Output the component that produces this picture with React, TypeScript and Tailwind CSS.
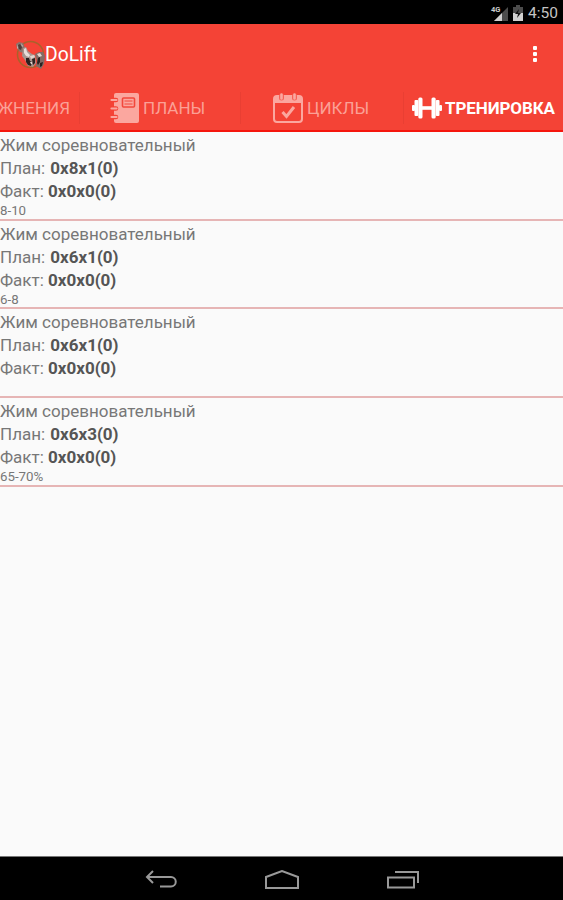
import type { ReactNode } from "react";

interface ExerciseProps {
  title: string;
  plan: string;
  fact: string;
  note: string;
}

const exercises: ExerciseProps[] = [
  { title: "Жим соревновательный", plan: "0x8x1(0)", fact: "0x0x0(0)", note: "8-10" },
  { title: "Жим соревновательный", plan: "0x6x1(0)", fact: "0x0x0(0)", note: "6-8" },
  { title: "Жим соревновательный", plan: "0x6x1(0)", fact: "0x0x0(0)", note: "" },
  { title: "Жим соревновательный", plan: "0x6x3(0)", fact: "0x0x0(0)", note: "65-70%" },
];

const LogoIcon = () => (
  <svg viewBox="0 0 30 30" className="h-[30px] w-[30px]">
    <circle cx="15.500" cy="14.500" r="13" fill="none" stroke="#a9622b" strokeWidth="1.5" />
    <path d="M1 4l3-2 4 1 2 5-1 5-4-1-3-4z" fill="#8c746c" />
    <path d="M8 8l3-1 2 4 4 3 3 1 1 8-3 4-5-1-3-6-3-4z" fill="#a8958e" />
    <path d="M20 14l4-2 4 0 2 4-1 8-3 5-5-3 1-5z" fill="#826c66" />
    <path d="M3 5l2-1 2 3-1 3-2-1z" fill="#4e3c3a" />
    <path d="M2 4l1 4-1 1zM6 3l2 3-1 1z" fill="#c9b9b2" />
    <path d="M9 9l2-1 1 4 3 3-1 2-3-1-2-3z" fill="#e8dfda" />
    <path d="M11 18l3 0 1 3 2 1-1 4-3-1-2-3zM17 19l3-1 0 5-2 2zM23 18l2-1 0 5-2 3-1-2zM25 23l3-1-1 4-2 1z" fill="#2c2120" />
    <path d="M15 16l4-1 1 2-4 2zM22 14l3-1 2 3-3 1zM15 22l2 0 0 2h-1z" fill="#e2d5ce" />
  </svg>
);

const NotebookIcon = () => (
  <svg viewBox="0 0 30 32" className="h-8 w-[30px]" fill="#fba79f">
    <path d="M6 1h21a2 2 0 012 2v26a2 2 0 01-2 2H6a2 2 0 01-2-2V3a2 2 0 012-2z" />
    <path d="M3 8h3M3 16.500h3M3 25h3" stroke="#f44336" strokeWidth="4.6" strokeLinecap="round" />
    <path d="M1.500 8h5M1.500 16.500h5M1.500 25h5" stroke="#fba79f" strokeWidth="2.2" strokeLinecap="round" />
    <rect x="12.500" y="6" width="12" height="9" rx="1" fill="none" stroke="#f2483c" strokeWidth="1.6" />
    <path d="M14.500 9h8M14.500 12h8" stroke="#f2483c" strokeWidth="1" />
  </svg>
);

const CalendarIcon = () => (
  <svg viewBox="0 0 32 32" className="h-8 w-8" fill="none" stroke="#fba79f">
    <rect x="2" y="4" width="28" height="26" rx="3" strokeWidth="2" />
    <path d="M2 11V7a3 3 0 013-3h22a3 3 0 013 3v4z" fill="#fba79f" stroke="none" />
    <path d="M9.500 4v2M22.500 4v2" stroke="#f66055" strokeWidth="5" strokeLinecap="round" />
    <path d="M9.500 2.500v4M22.500 2.500v4" strokeWidth="2.6" strokeLinecap="round" />
    <path d="M10.500 20l4 4.500 7.500-9.500" strokeWidth="3" />
  </svg>
);

const DumbbellIcon = () => (
  <svg viewBox="0 0 32 24" className="h-6 w-8" fill="#fff">
    <rect x="1" y="9" width="3" height="6" rx="1" />
    <rect x="3.500" y="4" width="3.800" height="16" rx="1" />
    <rect x="7.300" y="1.500" width="4.200" height="21" rx="1.500" />
    <rect x="11" y="10.200" width="10" height="3.600" />
    <rect x="20.500" y="1.500" width="4.200" height="21" rx="1.500" />
    <rect x="24.800" y="4" width="3.700" height="16" rx="1" />
    <rect x="28" y="9" width="3" height="6" rx="1" />
  </svg>
);

const StatusBar = () => (
  <div className="flex h-6 shrink-0 items-center justify-end bg-black pr-[5px] pt-px">
    <svg viewBox="0 0 34 18" className="mr-[5px] h-[18px] w-[34px]">
      <path d="M19 3v14H5z" fill="#4c4c4c" />
      <path d="M13 9v8H5z" fill="#d0d0d0" />
      <text x="2" y="8" fontSize="7.500" fontWeight="700" fill="#ccc">4G</text>
      <path d="M24 3h3V1h4v2h3v7H24z" fill="#4c4c4c" />
      <path d="M24 9h10v8H24z" fill="#d0d0d0" />
      <path d="M30 5l-4 5h3l-1 4 4-5h-3z" fill="#111" />
    </svg>
    <span className="text-[15.5px] leading-6 text-[#c4c4c4]">4:50</span>
  </div>
);

const AppBar = () => (
  <div className="flex h-[62px] items-center justify-between pl-[15px] pr-[26px]">
    <div className="flex items-center">
      <LogoIcon />
      <span className="text-[19.3px] leading-6 text-white">DoLift</span>
    </div>
    <div className="flex flex-col gap-[2px] pb-[2px]">
      <span className="h-[4px] w-[4px] rounded-[1px] bg-white" />
      <span className="h-[4px] w-[4px] rounded-[1px] bg-white" />
      <span className="h-[4px] w-[4px] rounded-[1px] bg-white" />
    </div>
  </div>
);

const Tab = ({ children, className }: { children: ReactNode; className: string }) => (
  <div className={`flex h-8 shrink-0 items-center whitespace-nowrap text-[17px] ${className}`}>
    {children}
  </div>
);

const Tabs = () => (
  <div className="flex h-[46px] items-center overflow-hidden border-b-2 border-[#f5160d] text-[#fba096]">
    <Tab className="w-[80px] justify-end border-r border-[#e93f33] pr-[9px]">
      <span className="pt-[2px]">ЖНЕНИЯ</span>
    </Tab>
    <Tab className="w-[161px] border-r border-[#e93f33] pl-[30px]">
      <NotebookIcon />
      <span className="ml-[3px] pt-[2px]">ПЛАНЫ</span>
    </Tab>
    <Tab className="w-[163px] border-r border-[#e93f33] pl-[31px]">
      <CalendarIcon />
      <span className="ml-[3px] pt-[2px]">ЦИКЛЫ</span>
    </Tab>
    <Tab className="pl-[7px] font-bold text-white">
      <DumbbellIcon />
      <span className="ml-[2px] pt-[2px] tracking-[-0.1px]">ТРЕНИРОВКА</span>
    </Tab>
  </div>
);

const Exercise = ({ title, plan, fact, note }: ExerciseProps) => (
  <div className="h-[88.7px] border-b-2 border-[#e6b5b5] pt-[2px] text-[17px] leading-[23px] text-[#777]">
    <p>{title}</p>
    <p>
      План: <b className="ml-px text-[#555]">{plan}</b>
    </p>
    <p>
      Факт: <b className="text-[#555]">{fact}</b>
    </p>
    <p className="text-[13.3px] leading-[16px]">{note}</p>
  </div>
);

const NavBar = () => (
  <div className="flex h-11 shrink-0 items-center justify-between border-t border-[#777] bg-black pl-[145px] pr-[143px] pt-[2px]">
    <svg viewBox="0 0 34 20" className="h-5 w-[34px]" fill="none" stroke="#999" strokeWidth="2">
      <path d="M8 1L2 7l6 6M2 7h24a4.500 4.500 0 010 9.500H15" />
    </svg>
    <svg viewBox="0 0 36 20" className="mr-[2px] h-5 w-9" fill="none" stroke="#999" strokeWidth="2">
      <path d="M2 18V7l16-6 16 6v11z" />
    </svg>
    <svg viewBox="0 0 34 20" className="h-5 w-[34px]" fill="none" stroke="#999" strokeWidth="2">
      <path d="M2 7.500h26v10H2zM9 2h23v11" />
    </svg>
  </div>
);

const App = () => {
  return (
    <div className="flex h-[900px] w-[563px] flex-col overflow-hidden bg-[#fafafa] font-['Roboto',sans-serif]">
      <StatusBar />
      <div className="shrink-0 bg-[#f44336]">
        <AppBar />
        <Tabs />
      </div>
      <div className="flex-1">
        {exercises.map((item, index) => (
          <Exercise key={index} {...item} />
        ))}
      </div>
      <NavBar />
    </div>
  );
};

export default App;
